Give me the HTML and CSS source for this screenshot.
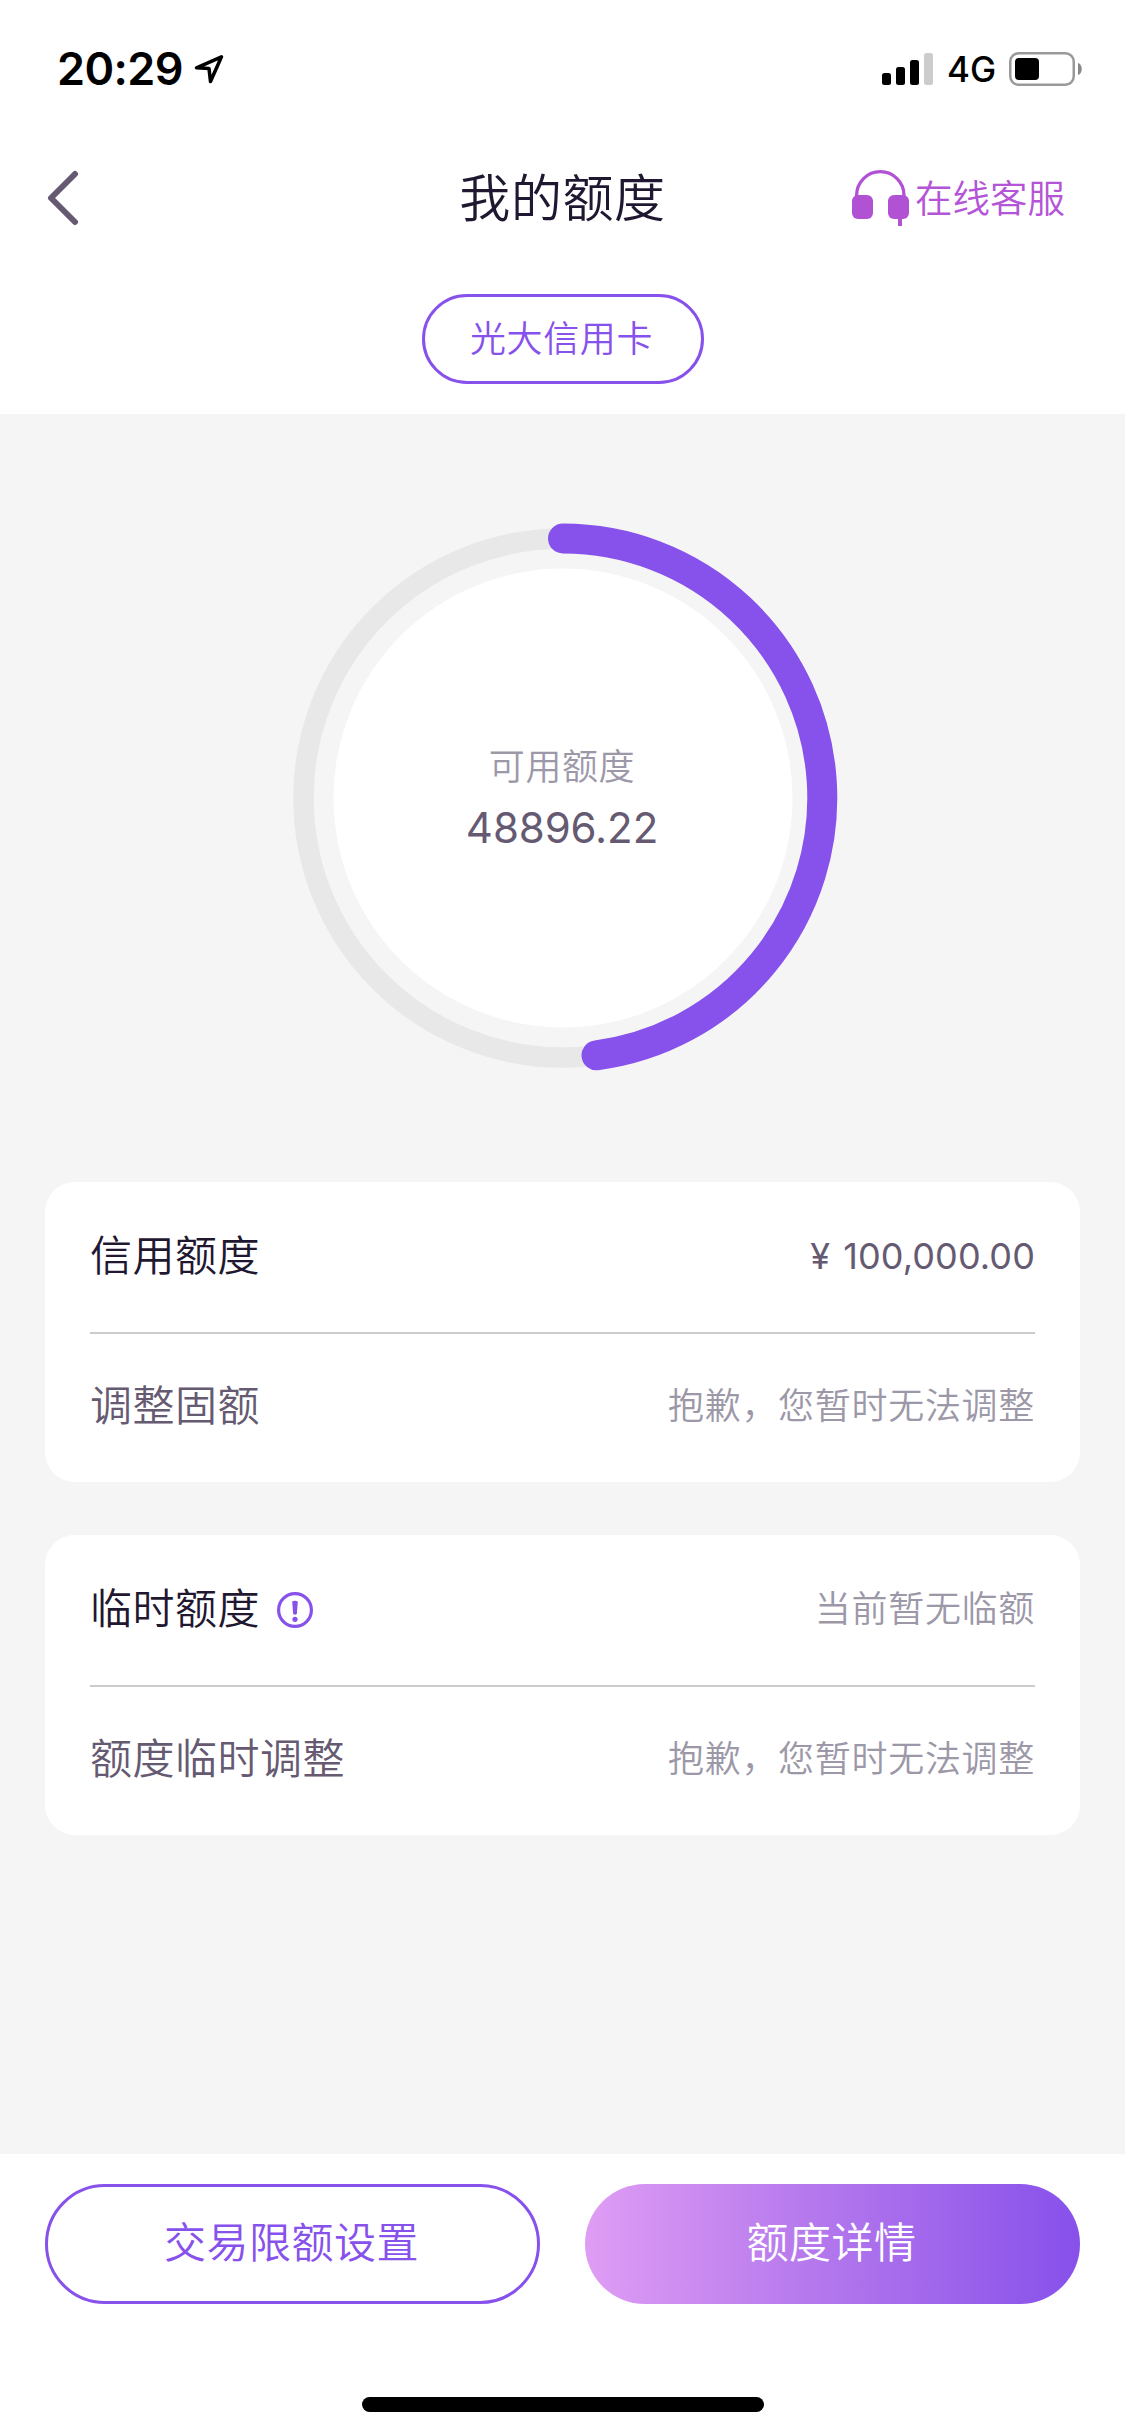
FILE: index.html
```html
<!DOCTYPE html>
<html lang="zh-CN">
<head>
<meta charset="utf-8">
<title>我的额度</title>
<link rel="stylesheet" href="styles.css">
</head>
<body>
<div class="screen">
  <div class="status">
    <span class="time">20:29</span>
    <svg class="location" width="32" height="32" viewBox="0 0 32 32"><path d="M28.500 3.800 3.500 14.800 16 15.500 17.500 28.500Z" fill="none" stroke="#000" stroke-width="3.500" stroke-linejoin="round"/></svg>
    <svg class="signal" width="51" height="32" viewBox="0 0 51 32"><rect y="20" width="9" height="12" rx="2.5"/><rect x="14" y="14" width="9" height="18" rx="2.5"/><rect x="28" y="7" width="9" height="25" rx="2.5"/><rect x="42" width="9" height="32" rx="2.5" fill="#ccc"/></svg>
    <span class="network">4G</span>
    <svg class="battery" width="74" height="34" viewBox="0 0 74 34"><rect x="1.25" y="1.25" width="63.5" height="31.5" rx="8.5" fill="none" stroke="#999" stroke-width="2.5"/><rect x="6" y="6" width="24" height="22" rx="4"/><path d="M69 11c5 1 5 11 0 12z" fill="#888"/></svg>
  </div>
  <header class="nav">
    <svg class="back" width="32" height="56" viewBox="0 0 32 56"><path d="M28 4 4 28 28 52" fill="none" stroke="#655a72" stroke-width="6" stroke-linecap="round" stroke-linejoin="round"/></svg>
    <h1 class="title">我的额度</h1>
    <div class="service">
      <svg width="58" height="56" viewBox="0 0 58 56"><path d="M4.600 28V25.400A23.700 23.700 0 0 1 52 25.400V28" fill="none" stroke="#b151d3" stroke-width="3.300"/><rect y="25" width="21" height="24" rx="6" fill="#b151d3"/><rect x="36" y="25" width="21" height="24" rx="6" fill="#b151d3"/><path d="M48 48V56" stroke="#b151d3" stroke-width="4"/></svg>
      <span>在线客服</span>
    </div>
  </header>
  <div class="tabs"><span class="chip">光大信用卡</span></div>
  <main class="content">
    <div class="gauge">
      <svg class="ring" width="550" height="550" viewBox="0 0 550 550">
        <circle cx="275" cy="275" r="259.500" fill="none" stroke="#e8e8e8" stroke-width="20.500"/>
        <circle cx="275" cy="275" r="229.500" fill="#fff"/>
        <path d="M275 15.500A259.500 259.500 0 0 1 308.500 532.300" fill="none" stroke="#8751eb" stroke-width="30" stroke-linecap="round"/>
      </svg>
      <div class="gauge-text">
        <span class="gauge-label">可用额度</span>
        <span class="gauge-value">48896.22</span>
      </div>
    </div>
    <section class="card">
      <div class="row"><span class="name strong">信用额度</span><span class="amount">¥ 100,000.00</span></div>
      <div class="row"><span class="name">调整固额</span><span class="note">抱歉，您暂时无法调整</span></div>
    </section>
    <section class="card">
      <div class="row"><span class="name strong">临时额度</span>
        <svg class="info" width="36" height="36" viewBox="0 0 36 36"><circle cx="18" cy="18" r="16.400" fill="none" stroke="#8751eb" stroke-width="3.200"/><path d="M15.200 9.500Q18 7.800 20.800 9.500L19.900 21.500Q18 24 16.100 21.500Z" fill="#8751eb"/><circle cx="18" cy="27.300" r="2.600" fill="#8751eb"/></svg>
        <span class="note">当前暂无临额</span></div>
      <div class="row"><span class="name">额度临时调整</span><span class="note">抱歉，您暂时无法调整</span></div>
    </section>
  </main>
  <footer class="footer">
    <div class="actions">
      <button class="btn outline">交易限额设置</button>
      <button class="btn filled">额度详情</button>
    </div>
    <div class="home-bar"></div>
  </footer>
</div>
</body>
</html>
```
FILE: styles.css
```css
* { box-sizing: border-box; }
body { margin: 0; background: #fff; }
.screen {
  width: 1125px;
  height: 2436px;
  display: flex;
  flex-direction: column;
  font-family: Inter, "Noto Sans CJK SC", sans-serif;
  font-weight: 350;
  color: #655a72;
}
svg { display: block; flex: none; }
span { white-space: nowrap; }

.status {
  height: 138px;
  padding: 0 42px 0 57px;
  display: flex;
  align-items: center;
  color: #000;
}
.time { width: 136px; font-size: 45px; line-height: 54px; letter-spacing: -0.6px; font-weight: 600; }
.signal { margin-left: auto; }
.network { margin-left: 14px; width: 62px; font-size: 35px; line-height: 42px; font-weight: 500; }

.nav {
  height: 120px;
  padding: 0 60px 0 47px;
  display: grid;
  grid-template-columns: 1fr auto 1fr;
  align-items: center;
}
.title {
  margin: 0;
  padding: 2px 0 0 13px;
  font-size: 51px;
  line-height: 60px;
  letter-spacing: 0.6px;
  font-weight: 350;
  color: #1f1830;
}
.service {
  justify-self: end;
  display: flex;
  align-items: center;
  gap: 5px;
  font-size: 37.500px;
  line-height: 44px;
  color: #b355d6;
}
.service span { padding-top: 2px; }

.tabs { height: 156px; padding-top: 36px; display: flex; justify-content: center; }
.chip {
  width: 282px;
  height: 90px;
  padding: 0 2px 7px 0;
  display: flex;
  align-items: center;
  justify-content: center;
  border: 3px solid #8751eb;
  border-radius: 45px;
  font-size: 36px;
  letter-spacing: 0.6px;
  color: #8751eb;
}

.content { height: 1740px; padding: 109px 45px 0; background: #f5f5f5; }
.gauge { display: grid; justify-content: center; margin-bottom: 109px; }
.ring, .gauge-text { grid-area: 1 / 1; }
.gauge-text {
  padding: 215px 1px 0 0;
  display: flex;
  flex-direction: column;
  align-items: center;
}
.gauge-label { font-size: 36px; line-height: 58px; letter-spacing: 0.6px; color: #9c98a8; }
.gauge-value { font-size: 42px; line-height: 64px; letter-spacing: -0.1px; font-weight: 400; color: #655a72; }

.card { height: 300px; padding: 0 45px; border-radius: 30px; background: #fff; }
.card + .card { margin-top: 53px; }
.row { height: 150px; padding-bottom: 2px; display: flex; align-items: center; }
.row + .row { border-top: 2px solid #ccc; padding-bottom: 4px; }
.name { font-size: 42px; line-height: 50px; letter-spacing: 0.5px; }
.strong { color: #1f1830; }
.info { margin-left: 17px; position: relative; top: 1px; }
.amount, .note { margin-left: auto; font-size: 36px; line-height: 44px; }
.amount { padding-bottom: 1px; font-weight: 400; letter-spacing: 0.1px; word-spacing: 3px; }
.note { letter-spacing: 0.7px; color: #9c98a8; }

.footer { flex: 1; padding: 30px 45px 24px; display: flex; flex-direction: column; justify-content: space-between; }
.actions { display: grid; grid-template-columns: 1fr 1fr; gap: 45px; }
.btn {
  height: 120px;
  padding: 0 2px 10px 0;
  border: 0;
  border-radius: 60px;
  font: inherit;
  font-size: 42px;
  letter-spacing: 0.5px;
}
.outline { border: 3px solid #8751eb; background: #fff; color: #8751eb; }
.filled { background: linear-gradient(90deg, #df9df4, #b679ed 45%, #8750ea); color: #fff; }
.home-bar { width: 402px; height: 15px; align-self: center; border-radius: 8px; background: #000; }
```
